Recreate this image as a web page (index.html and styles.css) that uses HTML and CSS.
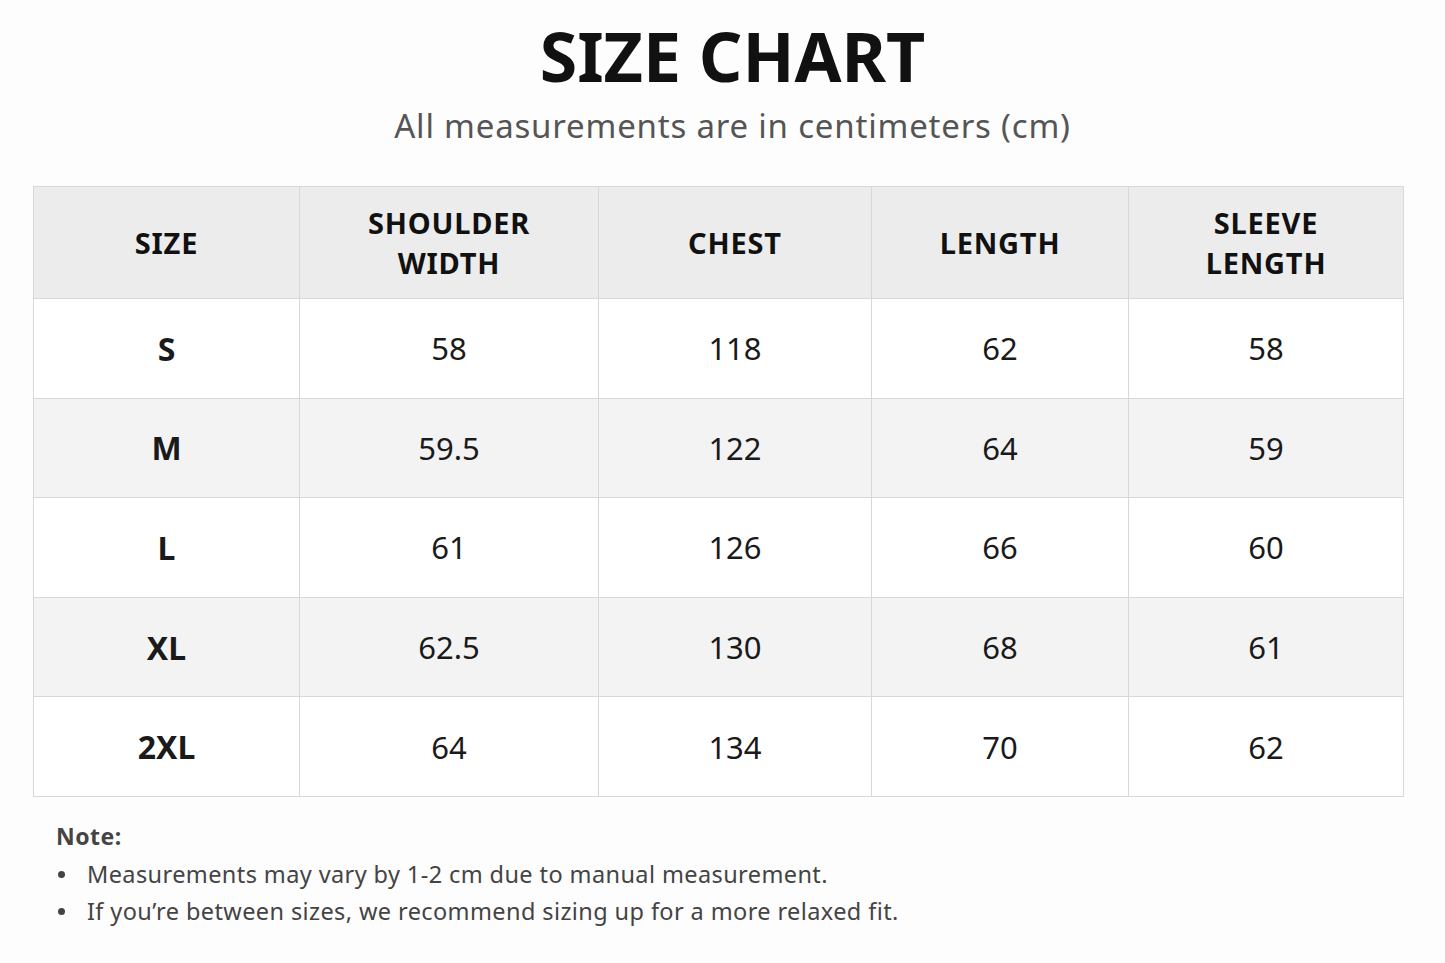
FILE: index.html
```html
<!DOCTYPE html>
<html lang="en">
<head>
<meta charset="utf-8">
<title>Size Chart</title>
<link rel="stylesheet" href="styles.css">
</head>
<body>
<main class="page">
  <header class="head">
    <h1 class="title">SIZE CHART</h1>
    <p class="subtitle">All measurements are in centimeters (cm)</p>
  </header>
  <table class="chart">
    <colgroup>
      <col class="c1"><col class="c2"><col class="c3"><col class="c4"><col class="c5">
    </colgroup>
    <thead>
      <tr><th>SIZE</th><th>SHOULDER<br>WIDTH</th><th>CHEST</th><th>LENGTH</th><th>SLEEVE<br>LENGTH</th></tr>
    </thead>
    <tbody>
      <tr><td class="sz">S</td><td>58</td><td>118</td><td>62</td><td>58</td></tr>
      <tr><td class="sz">M</td><td>59.5</td><td>122</td><td>64</td><td>59</td></tr>
      <tr><td class="sz">L</td><td>61</td><td>126</td><td>66</td><td>60</td></tr>
      <tr><td class="sz">XL</td><td>62.5</td><td>130</td><td>68</td><td>61</td></tr>
      <tr><td class="sz">2XL</td><td>64</td><td>134</td><td>70</td><td>62</td></tr>
    </tbody>
  </table>
  <section class="note">
    <h2 class="note-title">Note:</h2>
    <ul class="note-list">
      <li>Measurements may vary by 1-2 cm due to manual measurement.</li>
      <li>If you’re between sizes, we recommend sizing up for a more relaxed fit.</li>
    </ul>
  </section>
</main>
</body>
</html>
```
FILE: styles.css
```css
html, body {
  margin: 0;
  padding: 0;
  background: #fdfdfd;
}
body {
  font-family: "Noto Sans", "Open Sans", sans-serif;
  color: #111;
}
.page {
  width: 1445px;
  height: 963px;
  padding-top: 16px;
  box-sizing: border-box;
}
.head {
  text-align: center;
  padding-left: 20px;
}
.title {
  margin: 0;
  font-size: 68px;
  line-height: 80px;
  font-weight: 700;
  letter-spacing: 0;
  color: #111;
}
.subtitle {
  margin: 8px 0 0;
  font-size: 33px;
  line-height: 44px;
  color: #555;
  letter-spacing: 0.8px;
}
.chart {
  margin: 38px 0 0 33px;
  width: 1370px;
  border-collapse: collapse;
  table-layout: fixed;
  background: #fff;
}
.c1 { width: 266px; }
.c2 { width: 299px; }
.c3 { width: 273px; }
.c4 { width: 257px; }
.c5 { width: 275px; }
.chart th, .chart td {
  border: 1.5px solid #d8d8d8;
  text-align: center;
  padding: 0;
}
.chart th {
  height: 111px;
  background: #ececec;
  font-size: 29px;
  line-height: 40px;
  font-weight: 700;
  letter-spacing: 0.8px;
  color: #111;
}
.chart td {
  height: 98.6px;
  font-size: 31px;
  color: #1a1a1a;
}
.chart td.sz {
  font-weight: 700;
  font-size: 32px;
}
.chart tbody tr:nth-child(even) td {
  background: #f3f3f3;
}
.note {
  margin: 24px 0 0 56px;
  color: #444;
}
.note-title {
  margin: 0;
  font-size: 23px;
  line-height: 30px;
  font-weight: 700;
  letter-spacing: 0.5px;
}
.note-list {
  list-style: none;
  margin: 5px 0 0;
  padding: 0;
  font-size: 23.5px;
  line-height: 37px;
  letter-spacing: 0.4px;
}
.note-list li {
  display: flex;
  align-items: center;
  gap: 22px;
}
.note-list li::before {
  content: "";
  flex: none;
  width: 7px;
  height: 7px;
  margin-left: 2px;
  border-radius: 50%;
  background: #444;
}
```
